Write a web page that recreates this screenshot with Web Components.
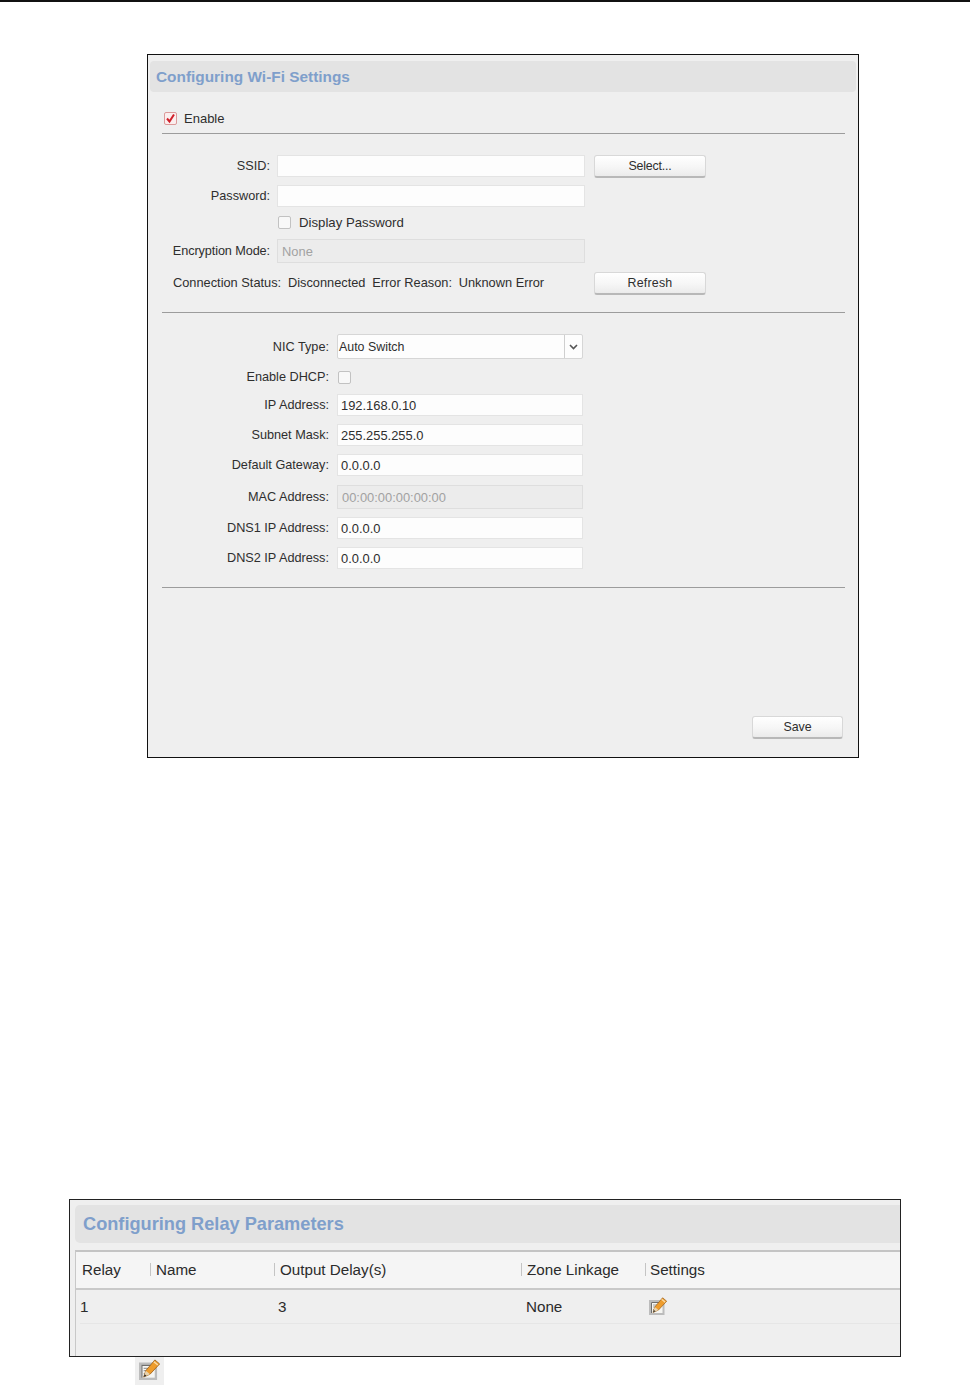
<!DOCTYPE html>
<html>
<head>
<meta charset="utf-8">
<style>
  html, body { margin: 0; padding: 0; background: #fff; }
  body { font-family: "Liberation Sans", Arial, sans-serif; color: #2b2b2b; height: 1385px; overflow: hidden; }
  .topline { height: 2px; background: #111; }
</style>
</head>
<body>
<div class="topline"></div>

<wifi-panel></wifi-panel>
<relay-panel></relay-panel>
<edit-chip></edit-chip>

<script>
const define = (name, html) => {
    customElements.define(name, class extends HTMLElement {
        constructor(){
            super()
            this.attachShadow({ mode: 'open' })
            const template = document.createElement('template')
            template.innerHTML = html
            this.shadowRoot.appendChild(template.content.cloneNode(true))
        }
    })
}

const pencil = `
<svg class="pencil" viewBox="0 0 18 18">
  <rect x="0" y="3" width="15.500" height="15" fill="#bcbcbc"/>
  <rect x="2" y="5" width="11.500" height="11" fill="#f5f5f2"/>
  <path d="M2.500 16V5.500H13" fill="none" stroke="#6f6f6f" stroke-width="1"/>
  <path d="M4 8h4M4 10h3M4 12.500h2" stroke="#a0a0a0" stroke-width="1"/>
  <path d="M4 15.500 L5.800 10 L13.600 0.800 L17.700 4.200 L9.500 13 Z" fill="#ee9c2c" stroke="#9c5e18" stroke-width="0.700"/>
  <path d="M12.700 2.300 L16.200 5.200" stroke="#fbdca6" stroke-width="1.200"/>
  <path d="M4 15.500 L5.800 10 L9.500 13 Z" fill="#e8d3ae"/>
  <path d="M4 15.500 L4.800 13 L6.500 14.300 Z" fill="#2a2a2a"/>
</svg>`

define('ui-title', `
<style>
  :host {
    display: block;
    background: #e3e3e3;
    border-radius: 4px;
    color: #7f9fcb;
    font: bold 15.400px "Liberation Sans", Arial, sans-serif;
    padding: 7px 6px 7px 6px;
    line-height: 17px;
  }
</style>
<slot></slot>`)

define('ui-rule', `
<style>
  :host { display: block; height: 1px; background: #9c9c9c; margin-left: 12px; margin-right: 11px; }
</style>`)

define('ui-field', `
<style>
  :host {
    display: grid;
    grid-template-columns: var(--label, 120px) var(--control, 308px) auto;
    column-gap: var(--colgap, 7px);
    align-items: center;
    font: 12.700px "Liberation Sans", Arial, sans-serif;
    color: #2e2e2e;
    margin-top: var(--gap, 8px);
  }
  .label { text-align: right; white-space: nowrap; }
  .extra { margin-left: 2px; }
</style>
<div class="label"><slot name="label"></slot></div>
<div class="control"><slot></slot></div>
<div class="extra"><slot name="extra"></slot></div>`)

define('ui-input', `
<style>
  :host {
    display: flex;
    align-items: center;
    box-sizing: border-box;
    height: 22px;
    padding: 0 3px;
    background: #fdfdfd;
    border: 1px solid #e4e4e4;
    font: 12.900px "Liberation Sans", Arial, sans-serif;
    color: #2e2e2e;
    white-space: nowrap;
  }
  :host([disabled]) { background: #ececec; border-color: #dedede; color: #a2a2a2; height: 24px; padding: 0 4px; }
</style>
<slot></slot>`)

define('ui-select', `
<style>
  :host {
    display: flex;
    box-sizing: border-box;
    height: 25px;
    background: #fdfdfd;
    border: 1px solid #d6d6d6;
    border-radius: 2px;
    font: 12.400px "Liberation Sans", Arial, sans-serif;
    color: #2e2e2e;
  }
  .value { flex: 1; display: flex; align-items: center; padding-left: 1px; }
  .arrow { width: 17px; border-left: 1px solid #cfcfcf; display: flex; align-items: center; justify-content: center; }
</style>
<div class="value"><slot></slot></div>
<div class="arrow">
  <svg width="9" height="6" viewBox="0 0 9 6"><path d="M1 1 L4.500 4.500 L8 1" fill="none" stroke="#555" stroke-width="1.600"/></svg>
</div>`)

define('ui-button', `
<style>
  :host {
    display: flex;
    align-items: center;
    justify-content: center;
    box-sizing: border-box;
    width: var(--w, 112px);
    height: 23px;
    background: linear-gradient(#ffffff, #f6f6f6 55%, #ebebeb);
    border: 1px solid #d8d8d8;
    border-bottom: 2px solid #b8b8b8;
    border-radius: 3px;
    font: 12.400px "Liberation Sans", Arial, sans-serif;
    color: #2e2e2e;
    letter-spacing: var(--track, 0);
  }
</style>
<slot></slot>`)

define('ui-check', `
<style>
  :host {
    display: inline-flex;
    align-items: center;
    gap: var(--check-gap, 7px);
    font: var(--check-size, 13px) "Liberation Sans", Arial, sans-serif;
    color: #2e2e2e;
    white-space: nowrap;
    vertical-align: middle;
  }
  .box {
    display: block;
    box-sizing: border-box;
    width: 13px;
    height: 13px;
    background: #f8f8f8;
    border: 1px solid #c2c2c2;
    border-radius: 2px;
    flex: none;
  }
  .box svg { display: none; }
  :host([checked]) .box { border-color: #dc9a9a; background: #fbeeee; }
  :host([checked]) .box svg { display: block; }
</style>
<span class="box"><svg width="11" height="11" viewBox="0 0 11 11"><path d="M2 5.500 L4.500 8.500 L9 1.500" fill="none" stroke="#d0202a" stroke-width="2"/></svg></span>
<slot></slot>`)

define('wifi-panel', `
<style>
  :host {
    display: block;
    box-sizing: border-box;
    width: 712px;
    height: 704px;
    margin: 52px 0 0 147px;
    padding: 6px 2px 0 2px;
    border: 1px solid #111;
    background: #efefef;
    font-family: "Liberation Sans", Arial, sans-serif;
  }
  .enable { padding: 17px 0 0 14px; height: 24px; }
  .form1 { padding-top: 21px; }
  .indent { padding: 6px 0 0 128px; height: 24px; box-sizing: border-box; --check-size: 13.200px; --check-gap: 8px; }
  .tight { letter-spacing: -0.100px; }
  .status {
    display: grid;
    grid-template-columns: 421px auto;
    align-items: center;
    padding: 9px 0 0 23px;
    font-size: 12.800px;
    color: #2e2e2e;
    white-space: nowrap;
  }
  .status div { padding-bottom: 2px; }
  .status span { margin-right: 6.800px; }
  .second { margin-top: 17px; }
  .form2 { padding-top: 21px; --label: 179px; --colgap: 8px; --control: 246px; }
  .dhcp { margin-left: 1px; }
  .third { margin-top: 18px; }
  .foot { display: flex; justify-content: flex-end; padding: 128px 13px 0 0; --w: 91px; }
</style>
<ui-title>Configuring Wi-Fi Settings</ui-title>
<div class="enable"><ui-check checked>Enable</ui-check></div>
<ui-rule></ui-rule>
<div class="form1">
  <ui-field style="--gap:0"><span slot="label">SSID:</span><ui-input></ui-input><ui-button slot="extra" style="--track:-0.200px;margin-bottom:-1px">Select...</ui-button></ui-field>
  <ui-field><span slot="label">Password:</span><ui-input></ui-input></ui-field>
  <div class="indent"><ui-check>Display Password</ui-check></div>
  <ui-field><span slot="label" class="tight">Encryption Mode:</span><ui-input disabled>None</ui-input></ui-field>
  <div class="status">
    <div><span>Connection Status:</span><span>Disconnected</span><span>Error Reason:</span><span>Unknown Error</span></div>
    <ui-button style="--track:0.200px">Refresh</ui-button>
  </div>
</div>
<ui-rule class="second"></ui-rule>
<div class="form2">
  <ui-field style="--gap:0"><span slot="label">NIC Type:</span><ui-select>Auto Switch</ui-select></ui-field>
  <ui-field style="--gap:11px"><span slot="label">Enable DHCP:</span><ui-check class="dhcp"></ui-check></ui-field>
  <ui-field style="--gap:10px"><span slot="label">IP Address:</span><ui-input>192.168.0.10</ui-input></ui-field>
  <ui-field><span slot="label">Subnet Mask:</span><ui-input>255.255.255.0</ui-input></ui-field>
  <ui-field><span slot="label">Default Gateway:</span><ui-input>0.0.0.0</ui-input></ui-field>
  <ui-field style="--gap:9px"><span slot="label">MAC Address:</span><ui-input disabled>00:00:00:00:00:00</ui-input></ui-field>
  <ui-field><span slot="label">DNS1 IP Address:</span><ui-input>0.0.0.0</ui-input></ui-field>
  <ui-field><span slot="label">DNS2 IP Address:</span><ui-input>0.0.0.0</ui-input></ui-field>
</div>
<ui-rule class="third"></ui-rule>
<div class="foot"><ui-button>Save</ui-button></div>`)

define('relay-panel', `
<style>
  :host {
    display: block;
    box-sizing: border-box;
    width: 832px;
    height: 158px;
    margin: 441px 0 0 69px;
    padding: 5px 0 0 5px;
    border: 1.500px solid #222;
    background: #efefef;
    font: 15.200px "Liberation Sans", Arial, sans-serif;
    color: #2b2b2b;
    overflow: hidden;
  }
  ui-title { font-size: 18.200px; padding: 10px 8px 9px 8px; line-height: 19px; border-radius: 5px 0 0 5px; }
  .table { margin-top: 7px; border-top: 2px solid #c4c4c4; border-left: 1px solid #c8c8c8; height: 110px; }
  .row { display: grid; grid-template-columns: 74px 124px 247px 124px 1fr; }
  .head { box-sizing: content-box; height: 34px; padding-bottom: 2px; background: #f5f5f5; border-bottom: 2px solid #c9c9c9; align-items: center; }
  .head div { padding-left: 5px; }
  .head div + div { border-left: 1px solid #c4c4c4; line-height: 13px; }
  .head div:first-child { padding-left: 6px; }
  .head div:last-child { padding-left: 4px; }
  .body { height: 33px; border-bottom: 1px solid #e6e6e6; align-items: center; margin-left: 4px; grid-template-columns: 198px 248px 123px 1fr; }
  .pencil { display: block; width: 18px; height: 18px; margin-top: -1px; }
</style>
<ui-title>Configuring Relay Parameters</ui-title>
<div class="table">
  <div class="row head"><div>Relay</div><div>Name</div><div>Output Delay(s)</div><div>Zone Linkage</div><div>Settings</div></div>
  <div class="row body"><div>1</div><div>3</div><div>None</div><div>${pencil}</div></div>
</div>`)

define('edit-chip', `
<style>
  :host {
    display: flex;
    align-items: center;
    justify-content: center;
    width: 29px;
    height: 28px;
    margin-left: 135px;
    background: #efefef;
  }
  .pencil { display: block; width: 21px; height: 21px; margin-bottom: 4px; }
</style>
${pencil}`)
</script>
</body>
</html>
